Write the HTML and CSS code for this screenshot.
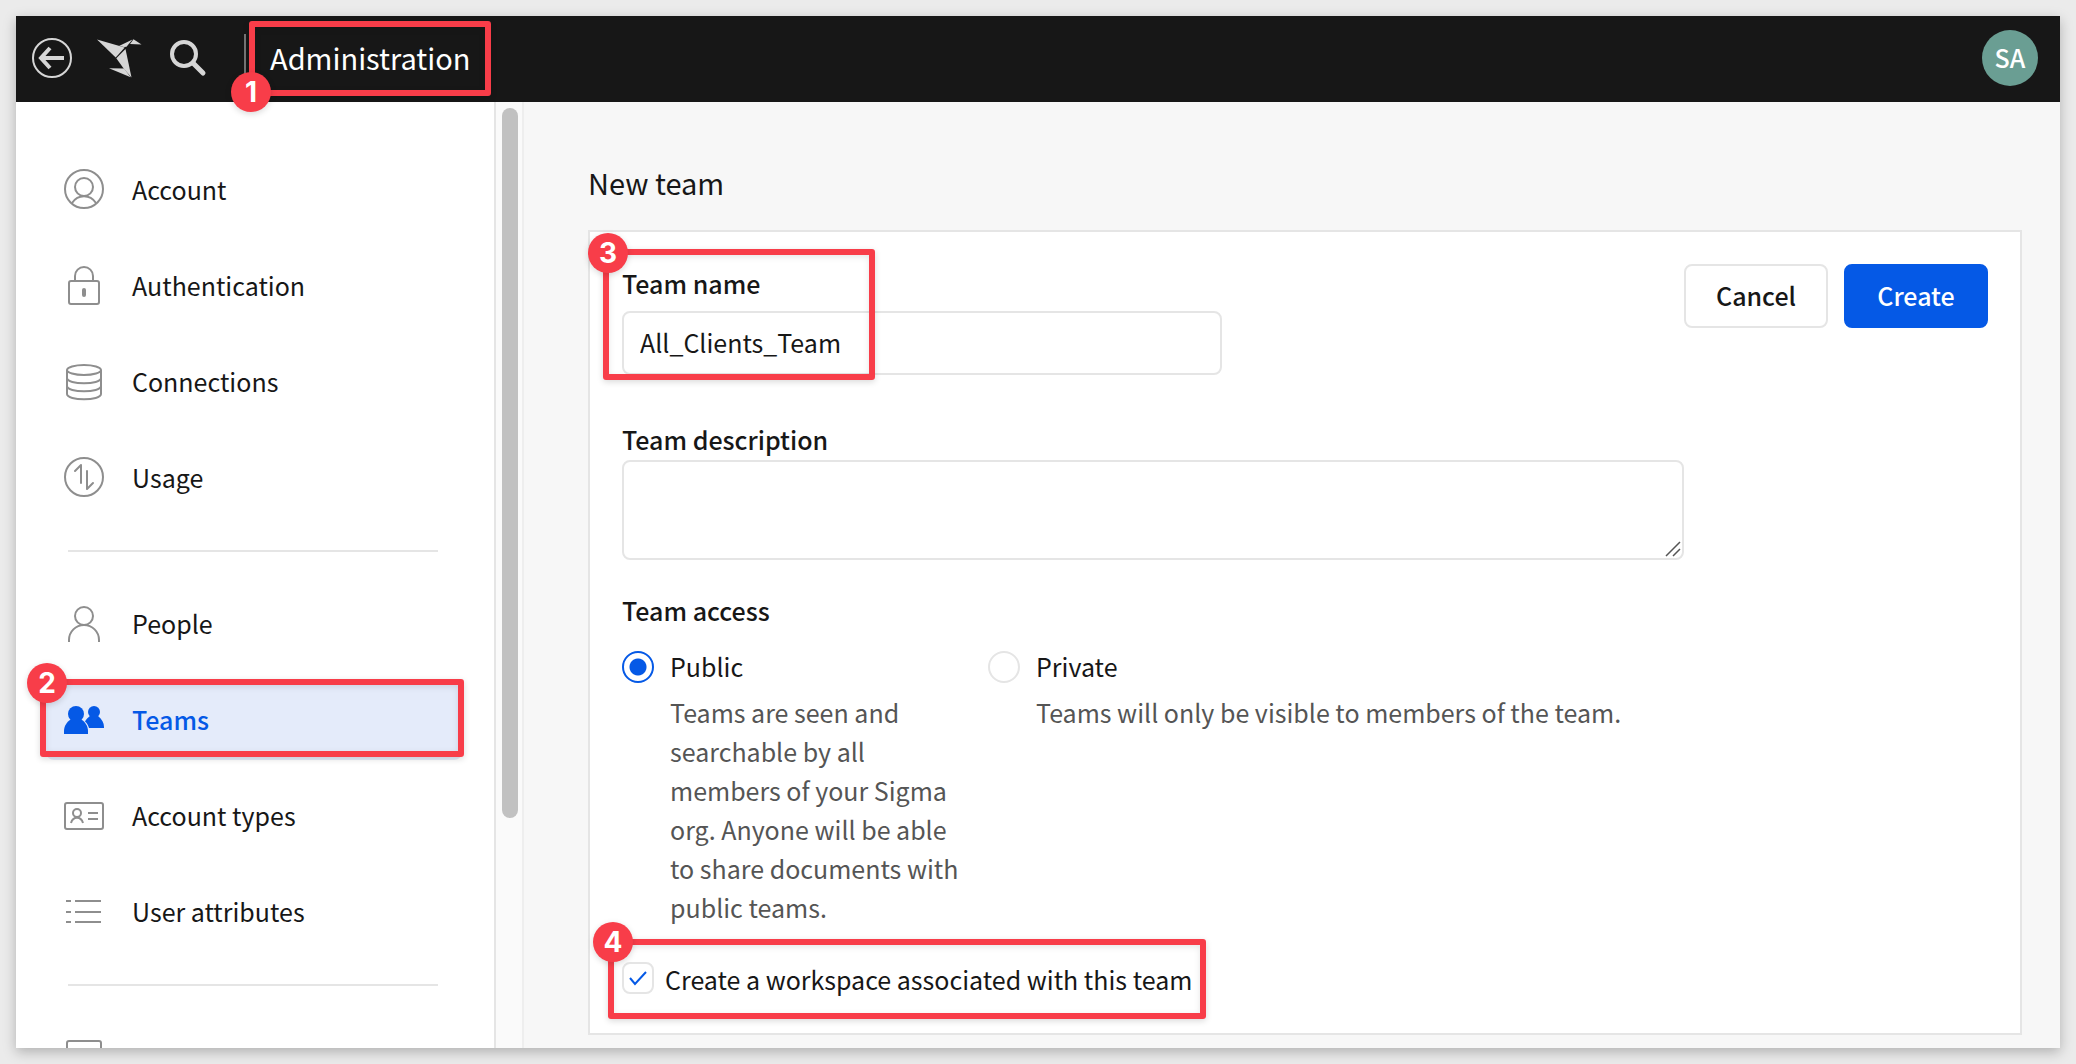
FILE: index.html
```html
<!DOCTYPE html>
<html lang="en">
<head>
<meta charset="utf-8">
<meta name="viewport" content="width=device-width, initial-scale=1">
<title>Administration</title>
<link rel="stylesheet" href="styles.css">
</head>
<body>
<div class="window">
  <header class="topbar">
    <button class="icon-button" type="button">
      <svg width="40" height="40" viewBox="0 0 40 40" fill="none" stroke="#d6d6d6"><circle cx="20" cy="20" r="19" stroke-width="2"/><path d="M32 20H10M18 10L9 20l9 10" stroke-width="4"/></svg>
    </button>
    <a class="logo" href="#">
      <svg width="46" height="40" viewBox="0 0 46 40" fill="#d6d6d6"><path d="M1 1.500L28.700 9.500L19.700 19.500Z"/><path d="M23 8L36.500 1.500L30.500 8.800L28 9Z"/><path d="M37.500 1.300L45.500 6.500L34 6Z"/><path d="M29.500 11L20.300 20.300L28 31L35.500 39.500Z"/><path d="M13 30.300L28 30.600L34.700 39.200Z"/></svg>
    </a>
    <button class="icon-button" type="button">
      <svg width="38" height="38" viewBox="0 0 38 38" fill="none" stroke="#d6d6d6"><circle cx="15" cy="15" r="12" stroke-width="4"/><path d="M24 24l10 10" stroke-width="5" stroke-linecap="round"/></svg>
    </button>
    <div class="topbar-title">
      <h1>Administration</h1>
      <span class="mark mark-title"><span class="mark-badge">1</span></span>
    </div>
    <button class="avatar" type="button">SA</button>
  </header>
  <div class="body">
    <nav class="sidebar">
      <ul class="nav-list">
        <li><a class="nav-item" href="#"><svg class="nav-icon" viewBox="0 0 40 40"><circle cx="20" cy="20" r="19"/><circle cx="20" cy="18" r="9"/><path d="M8 34c6-9 18-9 24 0"/></svg>Account</a></li>
        <li><a class="nav-item" href="#"><svg class="nav-icon" viewBox="0 0 40 40"><rect x="5" y="16" width="30" height="23" rx="2"/><path d="M11 16V11a9 9 0 0 1 18 0v5"/><path d="M20 25v5" stroke-width="4" stroke-linecap="round"/></svg>Authentication</a></li>
        <li><a class="nav-item" href="#"><svg class="nav-icon" viewBox="0 0 40 40"><ellipse cx="20" cy="9" rx="17" ry="5"/><path d="M3 9v24c0 7 34 7 34 0V9M3 17c0 7 34 7 34 0M3 25c0 7 34 7 34 0"/></svg>Connections</a></li>
        <li><a class="nav-item" href="#"><svg class="nav-icon" viewBox="0 0 40 40"><circle cx="20" cy="20" r="19"/><path d="M11 14l6-6v18M29 26l-6 6V14" stroke-linecap="round" stroke-linejoin="round"/></svg>Usage</a></li>
        <li class="nav-separator"></li>
        <li><a class="nav-item" href="#"><svg class="nav-icon" viewBox="0 0 40 40"><circle cx="20" cy="13" r="9"/><path d="M5 39v-2a15 15 0 0 1 30 0v2"/></svg>People</a></li>
        <li><a class="nav-item nav-item-current" href="#" aria-current="page"><svg class="nav-icon nav-icon-solid" viewBox="0 0 40 40"><circle cx="12" cy="15" r="8"/><path d="M6 21h12c3 2 6 6 6 11v3H0v-3c0-5 3-9 6-11z"/><circle cx="30" cy="13" r="6"/><path d="M26 17h8c4 3 6 7 6 11v1H25c-1-3-2-5-4-6.500 1-2 3-4 5-5.500z"/></svg>Teams<span class="mark mark-nav"><span class="mark-badge">2</span></span></a></li>
        <li><a class="nav-item" href="#"><svg class="nav-icon" viewBox="0 0 40 40"><rect x="1" y="8" width="38" height="26" rx="2"/><circle cx="13" cy="18" r="4"/><path d="M7 28c2-7 10-7 12 0M24 18h10M24 24h10"/></svg>Account types</a></li>
        <li><a class="nav-item" href="#"><svg class="nav-icon" viewBox="0 0 40 40"><path d="M2 10h5M2 21h5M2 31h5M11 10h26M11 21h26M11 31h26"/></svg>User attributes</a></li>
        <li class="nav-separator"></li>
        <li class="nav-item"><svg class="nav-icon" viewBox="0 0 40 40"><rect x="3" y="4" width="34" height="34" rx="2"/></svg></li>
      </ul>
    </nav>
    <div class="scroll-track"><div class="scroll-thumb"></div></div>
    <main class="content">
      <h2>New team</h2>
      <form class="card">
        <div class="card-top">
          <div class="field name-field">
            <label for="team-name">Team name</label>
            <input id="team-name" class="text-input" type="text" value="All_Clients_Team">
            <span class="mark mark-name"><span class="mark-badge">3</span></span>
          </div>
          <div class="actions">
            <button class="button" type="button">Cancel</button>
            <button class="button button-primary" type="submit">Create</button>
          </div>
        </div>
        <div class="field description-field">
          <label for="team-description">Team description</label>
          <div class="textarea-wrap">
            <textarea id="team-description" class="text-input"></textarea>
            <svg class="grip" width="16" height="16" viewBox="0 0 16 16" stroke="#555" stroke-width="1.500"><path d="M1 15L15 1M8 15l7-7"/></svg>
          </div>
        </div>
        <fieldset class="access">
          <legend>Team access</legend>
          <div class="access-options">
            <div class="option option-public">
              <input id="public" type="radio" name="access" checked aria-describedby="public-note">
              <label for="public">Public</label>
              <p id="public-note">Teams are seen and searchable by all members of your Sigma org. Anyone will be able to share documents with public teams.</p>
            </div>
            <div class="option">
              <input id="private" type="radio" name="access" aria-describedby="private-note">
              <label for="private">Private</label>
              <p id="private-note">Teams will only be visible to members of the team.</p>
            </div>
          </div>
        </fieldset>
        <div class="workspace">
          <span class="checkbox">
            <input id="workspace" type="checkbox" checked>
            <svg width="20" height="16" viewBox="0 0 20 16" fill="none" stroke="#0559e6" stroke-width="2"><path d="M2 8l5 6L18 2"/></svg>
          </span>
          <label for="workspace">Create a workspace associated with this team</label>
          <span class="mark mark-workspace"><span class="mark-badge">4</span></span>
        </div>
      </form>
    </main>
  </div>
</div>
</body>
</html>
```
FILE: styles.css
```css
:root {
  --ink: #171717;
  --muted: #555;
  --line: #e5e5e5;
  --blue: #0559e6;
  --red: #f83d49;
}
* { box-sizing: border-box; }
body {
  margin: 0;
  padding: 16px;
  background: #ebebeb;
  color: var(--ink);
  font: 400 25px/40px "Noto Sans CJK JP", "Noto Sans", sans-serif;
}
button, input, textarea { font: inherit; color: inherit; margin: 0; }
button { cursor: pointer; }
a { color: inherit; text-decoration: none; }
h1, h2 { margin: 0; font-size: 29px; font-weight: 400; line-height: 40px; }

.window {
  display: flex;
  flex-direction: column;
  height: calc(100vh - 32px);
  box-shadow: 0 4px 12px rgba(0, 0, 0, 0.25);
}

.topbar {
  display: flex;
  flex: none;
  align-items: center;
  height: 86px;
  padding: 0 22px 2px 16px;
  background: #171717;
  color: #fff;
}
.topbar svg { display: block; }
.icon-button { padding: 0; border: 0; background: none; }
.logo { margin: 0 27px 0 24px; }
.topbar-title {
  position: relative;
  margin-left: 37px;
  padding: 3px 0 5px 24px;
  border-left: 2px solid #757575;
}
.avatar {
  width: 56px;
  height: 56px;
  margin-left: auto;
  padding: 0 0 3px;
  border: 0;
  border-radius: 50%;
  background: #6a9e93;
  font-weight: 500;
}

.body { display: flex; flex: 1; min-height: 0; }
.sidebar {
  flex: none;
  width: 480px;
  overflow: hidden;
  background: #fff;
  border-right: 2px solid var(--line);
}
.nav-list {
  display: flex;
  flex-direction: column;
  gap: 18px;
  margin: 0;
  padding: 50px 32px 0 30px;
  list-style: none;
}
.nav-item {
  position: relative;
  display: flex;
  align-items: center;
  gap: 28px;
  height: 78px;
  padding: 0 18px 4px;
  border-radius: 8px;
}
.nav-item-current { background: #e4ebfa; color: var(--blue); font-weight: 500; }
.nav-icon {
  flex: none;
  width: 40px;
  height: 40px;
  fill: none;
  stroke: #8e8e8e;
  stroke-width: 2;
}
.nav-icon-solid { fill: var(--blue); stroke: none; }
.nav-separator { height: 2px; margin: 14px 24px 16px 22px; background: var(--line); }

.scroll-track {
  flex: none;
  width: 28px;
  padding: 6px;
  background: #fafafa;
  border-right: 2px solid #eee;
}
.scroll-thumb { width: 16px; height: 76%; border-radius: 8px; background: #c1c1c1; }

.content { flex: 1; min-width: 0; padding: 60px 38px 0 64px; background: #f7f7f7; overflow: hidden; }
.card {
  margin-top: 28px;
  padding: 32px 32px 34px;
  border: 2px solid var(--line);
  background: #fff;
}
.card-top { display: flex; justify-content: space-between; }
.field { position: relative; display: flex; flex-direction: column; }
.field label { line-height: 38px; }
.field label, legend { font-weight: 500; }
.text-input {
  width: 100%;
  border: 2px solid var(--line);
  border-radius: 8px;
  background: #fff;
}
.name-field { width: 600px; }
.name-field .text-input { height: 64px; margin-top: 9px; padding: 0 16px 2px; }
.actions { display: flex; gap: 16px; }
.button {
  width: 144px;
  height: 64px;
  padding: 0 0 2px;
  border: 2px solid var(--line);
  border-radius: 8px;
  background: #fff;
  font-weight: 500;
}
.button-primary { border-color: var(--blue); background: var(--blue); color: #fff; }
.description-field { gap: 2px; max-width: 1062px; margin-top: 45px; }
.textarea-wrap { position: relative; display: flex; }
.textarea-wrap textarea { height: 100px; padding: 12px 16px; resize: none; }
.grip { position: absolute; right: 3px; bottom: 3px; }

.access { margin: 30px 0 0; padding: 0; border: 0; min-width: 0; }
legend { padding: 0; }
.access-options { display: flex; gap: 18px; margin-top: 16px; }
.option {
  display: grid;
  grid-template-columns: 32px auto;
  column-gap: 16px;
  align-content: start;
  align-items: center;
}
.option-public { width: 348px; }
.option label { padding-bottom: 2px; }
.option p { grid-column: 2; margin: 5px 0 0; color: var(--muted); line-height: 39px; }
input[type="radio"] {
  appearance: none;
  width: 32px;
  height: 32px;
  border: 2px solid var(--line);
  border-radius: 50%;
  background: #fff;
}
input[type="radio"]:checked {
  border-color: var(--blue);
  background: radial-gradient(circle, var(--blue) 8px, #fff 9px);
}

.workspace {
  position: relative;
  display: flex;
  align-items: center;
  gap: 11px;
  width: max-content;
  margin-top: 30px;
}
.workspace label { padding-top: 2px; }
.checkbox { position: relative; display: flex; }
.checkbox input {
  appearance: none;
  width: 32px;
  height: 32px;
  border: 2px solid var(--line);
  border-radius: 8px;
}
.checkbox svg { position: absolute; left: 6px; top: 8px; pointer-events: none; }

.mark {
  position: absolute;
  border: 6px solid var(--red);
  border-radius: 3px;
  box-shadow: 0 2px 6px rgba(0, 0, 0, 0.15), inset 0 2px 6px rgba(0, 0, 0, 0.1);
  pointer-events: none;
}
.mark-badge {
  position: absolute;
  width: 40px;
  height: 40px;
  border-radius: 50%;
  background: var(--red);
  box-shadow: 0 2px 6px rgba(0, 0, 0, 0.15);
  color: #fff;
  font: 700 28px/40px Inter, sans-serif;
  text-align: center;
}
.mark-title { inset: -13px -20px -14px 3px; }
.mark-title .mark-badge { left: -24px; bottom: -22px; }
.mark-nav { inset: -3px -2px 3px -6px; }
.mark-nav .mark-badge { left: -19px; top: -22px; }
.mark-name { left: -19px; top: -15px; width: 272px; height: 131px; }
.mark-name .mark-badge { left: -21px; top: -22px; }
.mark-workspace { inset: -18px -14px -20px -14px; }
.mark-workspace .mark-badge { left: -21px; top: -23px; }
```
